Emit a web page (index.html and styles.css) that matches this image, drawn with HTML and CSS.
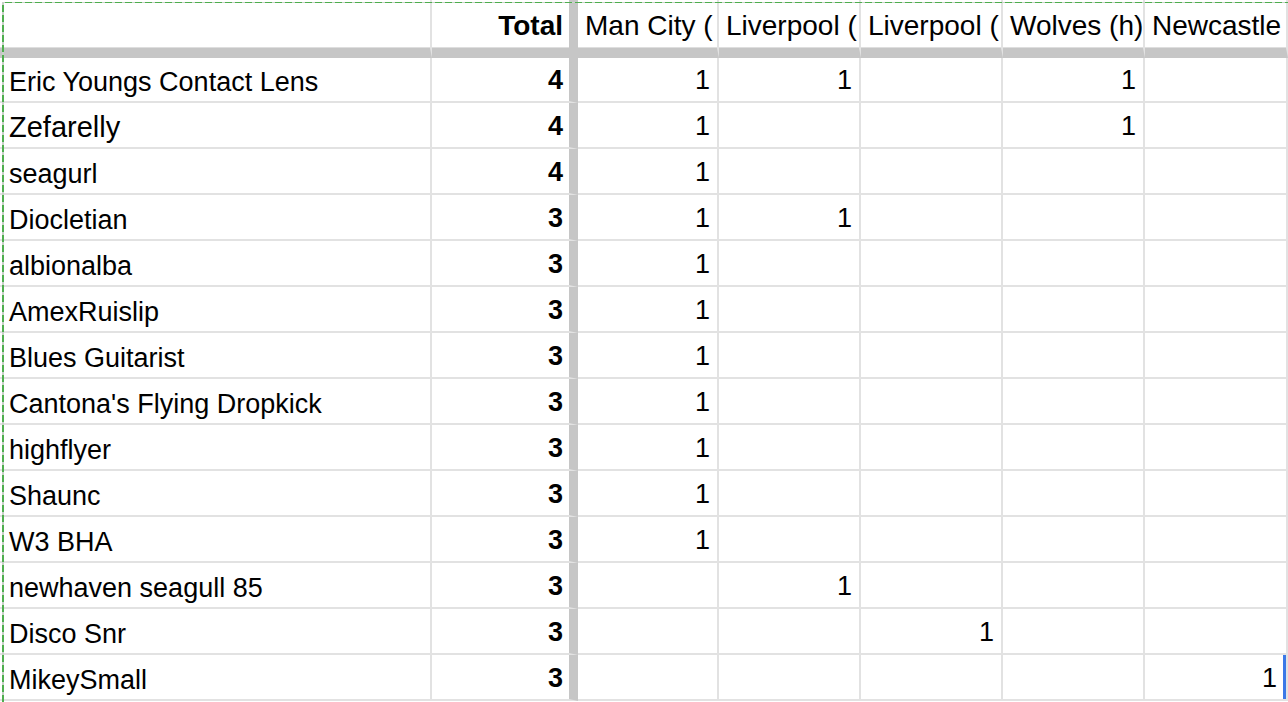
FILE: index.html
```html
<!DOCTYPE html>
<html>
<head>
<meta charset="utf-8">
<link rel="stylesheet" href="styles.css">
</head>
<body>
<div class="wrap">
  <div class="sheet">
    <div class="c hd"></div><div class="c hd tot colb">Total</div><div class="c hd">Man City (</div><div class="c hd">Liverpool (</div><div class="c hd">Liverpool (</div><div class="c hd">Wolves (h)</div><div class="c hd">Newcastle</div>

    <div class="c name">Eric Youngs Contact Lens</div><div class="c num tot colb">4</div><div class="c num">1</div><div class="c num">1</div><div class="c num"></div><div class="c num">1</div><div class="c num"></div>
    <div class="c name big">Zefarelly</div><div class="c num tot colb">4</div><div class="c num">1</div><div class="c num"></div><div class="c num"></div><div class="c num">1</div><div class="c num"></div>
    <div class="c name">seagurl</div><div class="c num tot colb">4</div><div class="c num">1</div><div class="c num"></div><div class="c num"></div><div class="c num"></div><div class="c num"></div>
    <div class="c name">Diocletian</div><div class="c num tot colb">3</div><div class="c num">1</div><div class="c num">1</div><div class="c num"></div><div class="c num"></div><div class="c num"></div>
    <div class="c name">albionalba</div><div class="c num tot colb">3</div><div class="c num">1</div><div class="c num"></div><div class="c num"></div><div class="c num"></div><div class="c num"></div>
    <div class="c name">AmexRuislip</div><div class="c num tot colb">3</div><div class="c num">1</div><div class="c num"></div><div class="c num"></div><div class="c num"></div><div class="c num"></div>
    <div class="c name">Blues Guitarist</div><div class="c num tot colb">3</div><div class="c num">1</div><div class="c num"></div><div class="c num"></div><div class="c num"></div><div class="c num"></div>
    <div class="c name">Cantona's Flying Dropkick</div><div class="c num tot colb">3</div><div class="c num">1</div><div class="c num"></div><div class="c num"></div><div class="c num"></div><div class="c num"></div>
    <div class="c name">highflyer</div><div class="c num tot colb">3</div><div class="c num">1</div><div class="c num"></div><div class="c num"></div><div class="c num"></div><div class="c num"></div>
    <div class="c name">Shaunc</div><div class="c num tot colb">3</div><div class="c num">1</div><div class="c num"></div><div class="c num"></div><div class="c num"></div><div class="c num"></div>
    <div class="c name">W3 BHA</div><div class="c num tot colb">3</div><div class="c num">1</div><div class="c num"></div><div class="c num"></div><div class="c num"></div><div class="c num"></div>
    <div class="c name">newhaven seagull 85</div><div class="c num tot colb">3</div><div class="c num"></div><div class="c num">1</div><div class="c num"></div><div class="c num"></div><div class="c num"></div>
    <div class="c name">Disco Snr</div><div class="c num tot colb">3</div><div class="c num"></div><div class="c num"></div><div class="c num">1</div><div class="c num"></div><div class="c num"></div>
    <div class="c name">MikeySmall</div><div class="c num tot colb">3</div><div class="c num"></div><div class="c num"></div><div class="c num"></div><div class="c num"></div><div class="c num sel">1</div>
  </div>
  <div class="ants"></div>
</div>
</body>
</html>
```

FILE: styles.css
```css
html, body {
  margin: 0;
  padding: 0;
  background: #ffffff;
  overflow: hidden;
}

body {
  font-family: "Liberation Sans", Arial, Helvetica, sans-serif;
  color: #000000;
}

.wrap {
  position: relative;
  width: 1288px;
  height: 702px;
  overflow: hidden;
}

.sheet {
  display: grid;
  grid-template-columns: 432px 146px 141px 142px 142px 142px 143px;
  grid-template-rows: 58px 45px repeat(13, 46px);
  width: 1288px;
}

.c {
  box-sizing: border-box;
  display: flex;
  align-items: flex-end;
  overflow: hidden;
  white-space: nowrap;
  border-right: 2px solid #e2e2e2;
  border-bottom: 2px solid #e2e2e2;
  padding: 0 7px 5px 8px;
  font-size: 27px;
  line-height: 27px;
}

.hd {
  font-size: 28px;
  line-height: 28px;
  padding-bottom: 8px;
  padding-left: 7px;
  border-bottom: 10px solid #c6c6c6;
  box-shadow: inset 0 -1px 0 #dedede;
}

.colb {
  border-right: 9px solid #c6c6c6;
}

.name {
  padding-left: 9px;
}

.big {
  font-size: 29px;
  line-height: 29px;
  padding-bottom: 5px;
}

.num {
  justify-content: flex-end;
  padding-right: 7px;
  padding-bottom: 7px;
}

.tot {
  justify-content: flex-end;
  font-weight: bold;
  padding-right: 6px;
}

.sel {
  box-shadow: inset -3px 0 0 #3b78e7;
  padding-right: 9px;
}

.ants {
  position: absolute;
  top: 2px;
  left: 2px;
  right: 0;
  bottom: 0;
  pointer-events: none;
}

.ants::before {
  content: "";
  position: absolute;
  top: 0;
  left: 0;
  right: 0;
  height: 1px;
  background: repeating-linear-gradient(90deg, #c8d2c8 0 3px, #4fae4f 3px 10px);
}

.ants::after {
  content: "";
  position: absolute;
  top: 0;
  left: 0;
  bottom: 0;
  width: 2px;
  background: repeating-linear-gradient(180deg, #c8d2c8 0 3px, #4fae4f 3px 10px);
}
```
